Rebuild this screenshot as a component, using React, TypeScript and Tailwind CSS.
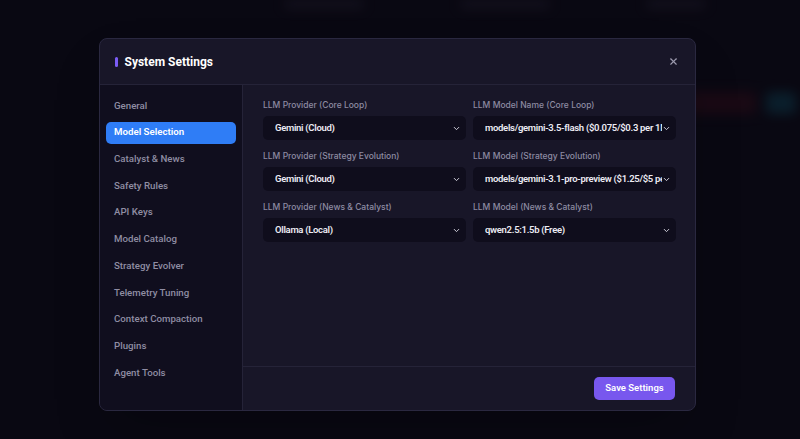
import { ChevronDown, X } from 'lucide-react';

const navItems = [
  'General',
  'Model Selection',
  'Catalyst & News',
  'Safety Rules',
  'API Keys',
  'Model Catalog',
  'Strategy Evolver',
  'Telemetry Tuning',
  'Context Compaction',
  'Plugins',
  'Agent Tools',
];

const fields = [
  ['LLM Provider (Core Loop)', 'Gemini (Cloud)', 'LLM Model Name (Core Loop)', 'models/gemini-3.5-flash ($0.075/$0.3 per 1M tokens)'],
  ['LLM Provider (Strategy Evolution)', 'Gemini (Cloud)', 'LLM Model (Strategy Evolution)', 'models/gemini-3.1-pro-preview ($1.25/$5 per 1M tokens)'],
  ['LLM Provider (News & Catalyst)', 'Ollama (Local)', 'LLM Model (News & Catalyst)', 'qwen2.5:1.5b (Free)'],
];

const roboto = { fontFamily: 'Roboto, "Noto Sans", sans-serif' };

function Select({ value }: { value: string }) {
  return (
    <div className="flex h-[24px] items-center rounded-[5px] bg-[#0f0d1c] pl-[12px] pr-[5px]">
      <span
        className="flex-1 overflow-hidden whitespace-nowrap text-[9.5px] font-semibold tracking-[-0.3px] text-[#ecebf3]"
        style={roboto}
      >
        {value}
      </span>
      <ChevronDown size={9} strokeWidth={2.5} className="shrink-0 text-[#d8d6e2]" />
    </div>
  );
}

function Field({ label, value }: { label: string; value: string }) {
  return (
    <div className="flex flex-col">
      <label className="mb-[5px] text-[8.5px] font-medium leading-[12px] text-[#8d8ba2]">{label}</label>
      <Select value={value} />
    </div>
  );
}

export default function App() {
  return (
    <div className="relative h-[439px] w-full overflow-hidden bg-[#0b0a14]" style={{ fontFamily: 'Inter, "Noto Sans", sans-serif' }}>
      {/* blurred page behind the dialog */}
      <div className="flex h-full flex-col gap-6 p-6 blur-[6px] opacity-60">
        <div className="flex gap-24 pl-[260px] -mt-[24px]">
          <div className="h-[8px] w-[80px] rounded bg-[#2a2838]" />
          <div className="h-[8px] w-[90px] rounded bg-[#2a2838]" />
          <div className="h-[8px] w-[60px] rounded bg-[#2a2838]" />
        </div>
        <div className="mt-[60px] -mr-[20px] flex justify-end gap-[10px]">
          <div className="h-[22px] w-[70px] rounded bg-[#3a0f1c]" />
          <div className="h-[22px] w-[30px] rounded bg-[#0f4a5c]" />
        </div>
      </div>

      {/* dialog overlay */}
      <div className="absolute inset-0 flex items-start justify-start bg-[#07060e]/40 pl-[99px] pt-[38px]">
        <div className="flex h-[373px] w-[597px] flex-col overflow-hidden rounded-[8px] border border-[#2a2840] bg-[#181628] shadow-2xl">
          <div className="flex h-[46px] shrink-0 items-center justify-between border-b border-[#252338] pl-[15px] pr-[16px]">
            <div className="flex items-center gap-[7px]">
              <div className="h-[10px] w-[2.5px] rounded-full bg-[#7b5cf5]" />
              <h2 className="text-[12px] font-bold text-white" style={roboto}>System Settings</h2>
            </div>
            <X size={11} strokeWidth={2.5} className="text-[#9c9aae]" />
          </div>

          <div className="flex flex-1 overflow-hidden">
            <nav className="flex w-[143px] shrink-0 flex-col gap-[4.7px] border-r border-[#252338] bg-[#100e1e] px-[6px] pt-[10px]" style={roboto}>
              {navItems.map((item) =>
                item === 'Model Selection' ? (
                  <div key={item} className="flex h-[22px] items-center rounded-[5px] bg-[#2f7df6] pl-[8px] text-[9.7px] font-semibold text-white">
                    {item}
                  </div>
                ) : (
                  <div key={item} className="flex h-[22px] items-center pl-[8px] text-[9.7px] font-medium text-[#8f8da3]">
                    {item}
                  </div>
                )
              )}
            </nav>

            <div className="flex flex-1 flex-col">
              <div className="flex flex-1 flex-col gap-[10px] pl-[20px] pr-[19px] pt-[14px]">
                {fields.map(([l1, v1, l2, v2]) => (
                  <div key={l1} className="grid grid-cols-2 gap-[7px]">
                    <Field label={l1} value={v1} />
                    <Field label={l2} value={v2} />
                  </div>
                ))}
              </div>
              <div className="flex h-[44px] shrink-0 items-center justify-end border-t border-[#252338] pr-[20px]">
                <button className="h-[23px] w-[81px] rounded-[5px] bg-[#7857ee] text-[9.5px] font-semibold text-white" style={roboto}>
                  Save Settings
                </button>
              </div>
            </div>
          </div>
        </div>
      </div>
    </div>
  );
}
